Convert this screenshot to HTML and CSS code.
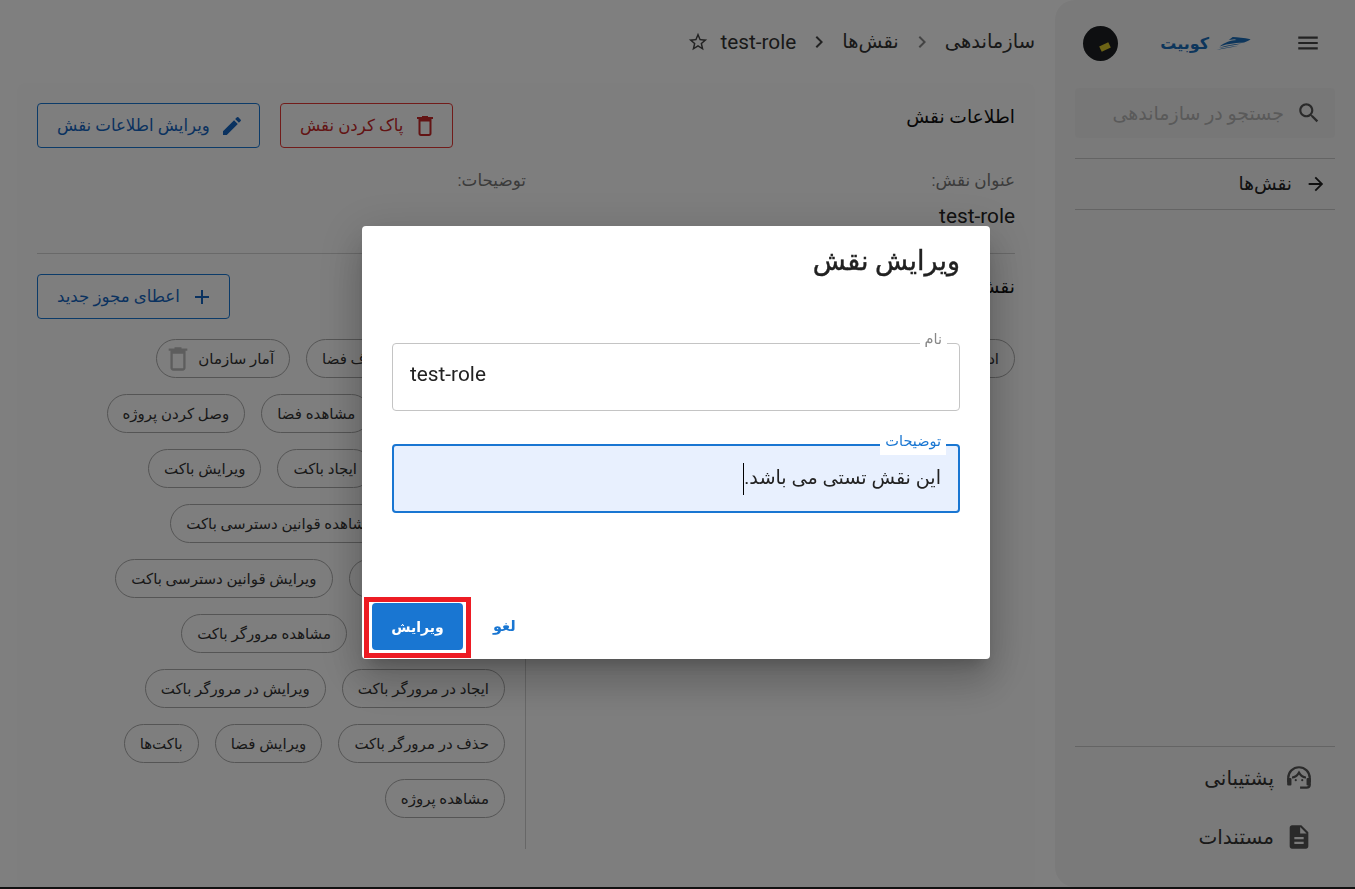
FILE: index.html
```html
<!DOCTYPE html>
<html lang="fa" dir="rtl">
<head>
<meta charset="utf-8">
<title>ویرایش نقش</title>
<link rel="stylesheet" href="styles.css">
</head>
<body>
<div class="app">
  <aside class="sidebar">
    <div class="side-top">
      <svg class="ico menu" viewBox="0 0 24 24"><path d="M3 18h18v-2H3v2zm0-5h18v-2H3v2zm0-7v2h18V6H3z"/></svg>
      <div class="logo">
        <svg class="boat" viewBox="0 0 105 40"><path d="M105 7C85 3 65 0 50 0L38 9l17-2 7 2C45 10 25 16 10 29c25-9 60-11 75-12 8-3 15-6 20-10z"/><path d="M7 34c23-9 48-12 71-14-23 5-48 9-71 14z"/><path d="M0 40c20-7 45-10 68-13-23 5-48 9-68 13z"/></svg>
        <span>کوبیت</span>
      </div>
      <div class="avatar"><i></i></div>
    </div>
    <div class="search">
      <svg class="ico" viewBox="0 0 24 24"><path d="M15.500 14h-.79l-.28-.27C15.410 12.590 16 11.110 16 9.500 16 5.910 13.090 3 9.500 3S3 5.910 3 9.500 5.910 16 9.500 16c1.610 0 3.090-.59 4.230-1.570l.27.28v.79l5 4.990L20.490 19l-4.990-5zm-6 0C7.010 14 5 11.990 5 9.500S7.010 5 9.500 5 14 7.010 14 9.500 11.990 14 9.500 14z"/></svg>
      <span>جستجو در سازماندهی</span>
    </div>
    <nav class="side-nav">
      <svg class="ico arrow" viewBox="0 0 24 24"><path d="M4 11v2h12l-5.500 5.500 1.420 1.420L19.840 12l-7.920-7.920L10.500 5.500 16 11z"/></svg>
      <span>نقش‌ها</span>
    </nav>
    <div class="side-bottom">
      <div class="side-link">
        <svg class="headset" viewBox="0 0 26 26"><path d="M3 17v-4a10 10 0 0 1 20 0v4"/><path d="M23 19c0 2-1 3-3 3h-6"/><path d="M6.500 12.500c3 0 5-2 6.500-4.500 1.500 2.500 3.500 4.500 6.500 4.500"/><rect class="solid" x="2" y="13" width="4" height="7" rx="1"/><rect class="solid" x="20" y="13" width="4" height="7" rx="1"/><circle class="solid" cx="10" cy="15" r="1"/><circle class="solid" cx="16" cy="15" r="1"/></svg>
        <span>پشتیبانی</span>
      </div>
      <div class="side-link">
        <svg class="ico" viewBox="0 0 24 24"><path d="M14 2H6c-1.100 0-1.990.9-1.990 2L4 20c0 1.100.89 2 1.990 2H18c1.100 0 2-.9 2-2V8l-6-6zm2 16H8v-2h8v2zm0-4H8v-2h8v2zm-3-5V3.500L18.500 9H13z"/></svg>
        <span>مستندات</span>
      </div>
    </div>
  </aside>

  <main class="main">
    <header class="crumbs">
      <span>سازماندهی</span>
      <svg class="chev light" viewBox="0 0 24 24"><path d="M10 6 8.590 7.410 13.170 12l-4.580 4.590L10 18l6-6z"/></svg>
      <span>نقش‌ها</span>
      <svg class="chev" viewBox="0 0 24 24"><path d="M10 6 8.590 7.410 13.170 12l-4.580 4.590L10 18l6-6z"/></svg>
      <span class="latin">test-role</span>
      <svg class="star" viewBox="0 0 24 24"><path d="M22 9.240l-7.190-.62L12 2 9.190 8.630 2 9.240l5.460 4.730L5.820 21 12 17.270 18.180 21l-1.630-7.020L22 9.240zM12 15.400l-3.760 2.270 1-4.280-3.320-2.880 4.380-.38L12 6.100l1.710 4.040 4.380.38-3.320 2.880 1 4.280L12 15.400z"/></svg>
    </header>

    <section class="card">
      <div class="head-row">
        <h2>اطلاعات نقش</h2>
        <div class="actions">
          <button class="btn danger">
            <svg class="ico" viewBox="0 0 24 24"><path d="M15 3V2H9v1H4v2h1.500v14.500c0 1.400 1 2.500 2.500 2.500h8c1.500 0 2.500-1.100 2.500-2.500V5H20V3h-5zm1.500 16.500c0 .3-.2.5-.5.5H8c-.3 0-.5-.2-.5-.5V7.500h9v12z"/></svg>
            پاک کردن نقش
          </button>
          <button class="btn primary">
            <svg class="ico" viewBox="0 0 24 24"><path d="M3 17.250V21h3.750L17.810 9.940l-3.750-3.750L3 17.250zM20.710 7.040c.39-.39.39-1.020 0-1.410l-2.340-2.340a.9959.9959 0 0 0-1.410 0l-1.830 1.830 3.750 3.750 1.830-1.830z"/></svg>
            ویرایش اطلاعات نقش
          </button>
        </div>
      </div>

      <div class="info">
        <div class="info-col">
          <p class="label">عنوان نقش:</p>
          <p class="value">test-role</p>
        </div>
        <div class="info-col">
          <p class="label">توضیحات:</p>
        </div>
      </div>

      <hr class="rule">

      <div class="head-row perm-head">
        <h2>نقش‌ها</h2>
        <button class="btn primary">
          <svg class="ico" viewBox="0 0 24 24"><path d="M19 13h-6v6h-2v-6H5v-2h6V5h2v6h6v2z"/></svg>
          اعطای مجوز جدید
        </button>
      </div>

      <div class="perm-grid">
        <div class="perm-col first">
          <div class="chip-row"><span class="chip">ادمین سازمان</span></div>
        </div>
        <div class="perm-col second">
          <div class="chip-row">
            <span class="chip">ایجاد فضا</span>
            <span class="chip">حذف فضا</span>
            <span class="chip with-icon">آمار سازمان
              <svg viewBox="0 0 24 24"><path d="M15 3V2H9v1H4v2h1.500v14.500c0 1.400 1 2.500 2.500 2.500h8c1.500 0 2.500-1.100 2.500-2.500V5H20V3h-5zm1.500 16.500c0 .3-.2.5-.5.5H8c-.3 0-.5-.2-.5-.5V7.500h9v12z"/></svg>
            </span>
          </div>
          <div class="chip-row">
            <span class="chip">ویرایش پروژه</span>
            <span class="chip">مشاهده فضا</span>
            <span class="chip">وصل کردن پروژه</span>
          </div>
          <div class="chip-row">
            <span class="chip">مشاهده باکت</span>
            <span class="chip">ایجاد باکت</span>
            <span class="chip">ویرایش باکت</span>
          </div>
          <div class="chip-row">
            <span class="chip">حذف باکت</span>
            <span class="chip">مشاهده قوانین دسترسی باکت</span>
          </div>
          <div class="chip-row">
            <span class="chip">ایجاد دسترسی باکت</span>
            <span class="chip">ویرایش قوانین دسترسی باکت</span>
          </div>
          <div class="chip-row">
            <span class="chip">حذف قوانین باکت</span>
            <span class="chip">مشاهده مرورگر باکت</span>
          </div>
          <div class="chip-row">
            <span class="chip">ایجاد در مرورگر باکت</span>
            <span class="chip">ویرایش در مرورگر باکت</span>
          </div>
          <div class="chip-row">
            <span class="chip">حذف در مرورگر باکت</span>
            <span class="chip">ویرایش فضا</span>
            <span class="chip">باکت‌ها</span>
          </div>
          <div class="chip-row">
            <span class="chip">مشاهده پروژه</span>
          </div>
        </div>
      </div>
    </section>
  </main>
</div>

<div class="overlay">
  <div class="modal">
    <h1>ویرایش نقش</h1>
    <div class="modal-body">
      <fieldset class="field">
        <legend>نام</legend>
        <div class="field-text latin-input">test-role</div>
      </fieldset>
      <fieldset class="field focused">
        <legend>توضیحات</legend>
        <div class="field-text">این نقش تستی می باشد.<span class="caret"></span></div>
      </fieldset>
    </div>
    <div class="modal-actions">
      <button class="cancel">لغو</button>
      <button class="submit">ویرایش</button>
    </div>
    <div class="highlight"></div>
  </div>
</div>
</body>
</html>
```
FILE: styles.css
```css
* { box-sizing: border-box; }
html, body { margin: 0; height: 100%; }
body {
  font-family: Roboto, "DejaVu Sans", sans-serif;
  color: #212121;
  background: #222;
  overflow: hidden;
}
p, h1, h2 { margin: 0; }
button { font-family: inherit; }
.ico { width: 24px; height: 24px; fill: currentColor; flex: none; }

.app { display: flex; height: 887px; background: #fff; }

.sidebar {
  width: 300px; flex: none; background: #f5f5f5;
  border-radius: 0 20px 20px 0;
  display: flex; flex-direction: column; padding: 0 20px;
}
[dir="rtl"] .sidebar { border-radius: 20px 0 0 20px; }
.side-top { height: 86px; margin-bottom: 2px; display: flex; align-items: center; color: #444; padding: 0 14px 0 17px; }
.menu { width: 26px; height: 26px; }
.logo { display: flex; align-items: center; gap: 7px; margin-right: 44px; color: #1b6cb8; font-size: 16px; font-weight: 700; }
.boat { width: 35px; height: 13px; fill: #1b6cb8; }
.avatar { width: 35px; height: 35px; border-radius: 50%; background: #1c1f22; margin-right: auto; margin-left: -9px; display: flex; align-items: center; justify-content: center; }
.avatar i { width: 10px; height: 6px; background: #d9c62a; transform: rotate(-25deg); margin-left: 8px; margin-top: 8px; }
.search {
  height: 50px; background: #efefef; border-radius: 4px;
  display: flex; align-items: center; gap: 12px; padding: 0 13px 0 0;
  font-size: 19px; color: #b4b4b4;
}
.search .ico { color: #555; width: 26px; height: 26px; }
.side-nav {
  margin-top: 20px; height: 52px;
  border-top: 1px solid #c8c8c8; border-bottom: 1px solid #c8c8c8;
  display: flex; align-items: center; gap: 13px; padding: 0 8px; font-size: 18.500px; color: #222;
}
.arrow { width: 22px; height: 22px; }
.side-bottom { margin-top: auto; border-top: 1px solid #c8c8c8; padding: 15px 22px 34px; display: flex; flex-direction: column; gap: 27px; }
.side-link { display: flex; align-items: center; gap: 11px; height: 32px; font-size: 20px; color: #333; }
.side-link .ico { width: 28px; height: 28px; color: #555; }
.headset { width: 28px; height: 28px; flex: none; fill: none; stroke: #555; stroke-width: 2; }
.headset .solid { fill: #555; stroke: none; }

.main { flex: 1; min-width: 0; padding: 0 20px 0 17px; }
.crumbs { height: 83px; display: flex; align-items: center; gap: 11px; font-size: 19.500px; color: #333; }
.latin { font-size: 20.800px; }
.chev { width: 24px; height: 24px; fill: #444; }
.chev.light { fill: #888; }
.star { width: 22px; height: 22px; fill: #444; }

.card { display: flex; flex-direction: column; background: #fdfdfd; padding: 0 20px; height: 804px; border-radius: 8px; }
.head-row { display: flex; align-items: flex-start; justify-content: space-between; padding-top: 20px; }
.head-row h2 { font-size: 18.700px; font-weight: 400; color: #111; line-height: 28px; }
.actions { display: flex; gap: 20px; }
.btn {
  height: 45px; border-radius: 4px; background: transparent;
  display: flex; align-items: center; gap: 10px; padding: 0 15px 0 19px;
  font-size: 16.600px; cursor: pointer;
}
.btn.primary { border: 1px solid #1976d2; color: #1565c0; }
.btn.danger { border: 1px solid #e53935; color: #c62828; }
.info { display: flex; margin-top: 20px; }
.info-col { width: 489px; }
.label { font-size: 16.800px; color: #777; line-height: 24px; }
.value { font-size: 20.800px; line-height: 24px; margin-top: 12px; color: #222; }
.rule { border: 0; border-top: 1px solid #d2d2d2; margin: 25px 0 0; }
.perm-head { padding-top: 20px; }
.perm-head h2 { margin-top: -1px; }
.perm-grid { display: flex; margin-top: 20px; }
.perm-col { width: 489px; display: flex; flex-direction: column; gap: 16px; }
.perm-col.second { border-right: 1px solid #cfcfcf; padding-right: 20px; height: 510px; }
.chip-row { display: flex; gap: 16px; }
.chip {
  height: 39px; border: 1px solid #aaa; border-radius: 20px;
  padding: 0 15px; display: inline-flex; align-items: center; flex: none;
  font-size: 15px; color: #333;
}
.chip.with-icon svg { width: 28px; height: 28px; fill: #bbb; margin-right: 6px; margin-left: -8px; }

.overlay { position: fixed; inset: 0; background: rgba(0,0,0,.5); }
.modal {
  position: absolute; left: 362px; top: 226px; width: 628px; height: 433px;
  background: #fff; border-radius: 4px;
  box-shadow: 0 11px 15px -7px rgba(0,0,0,.2), 0 24px 38px 3px rgba(0,0,0,.14), 0 9px 46px 8px rgba(0,0,0,.12);
  display: flex; flex-direction: column; padding: 0 30px;
}
.modal h1 { font-size: 27px; font-weight: 400; -webkit-text-stroke: .4px #212121; line-height: 32px; margin-top: 19px; color: #212121; }
.modal-body { display: flex; flex-direction: column; gap: 24px; margin-top: 56px; }
.field {
  margin: 0; padding: 0; height: 78px; border: 1px solid #c4c4c4; border-radius: 4px;
  background: #fff;
}
.field legend {
  margin: 0 12px 0 0; padding: 0 5px 6px; font-size: 14.500px; color: #888; line-height: 14px;
}
.field-text { padding: 0 17px; font-size: 19.200px; line-height: 30px; margin-top: 6px; color: #222; }
.latin-input { direction: ltr; text-align: left; font-size: 20.800px; }
.field.focused { border: 2px solid #1976d2; background: #e8f0fe; }
.field.focused legend { color: #1976d2; background: #fff; }
.field.focused .field-text { margin-top: 8px; }
.caret { display: inline-block; width: 1px; height: 32px; background: #000; vertical-align: middle; }
.modal-actions { position: absolute; left: 10px; bottom: 9px; display: flex; flex-direction: row; gap: 22px; align-items: center; }
.submit { width: 91px; height: 47px; border: 0; border-radius: 4px; background: #1976d2; color: #fff; font-size: 14px; font-weight: 700; }
.cancel { border: 0; background: none; color: #1976d2; font-size: 14.500px; font-weight: 700; padding: 0 8px; }
.highlight { position: absolute; left: 2px; top: 371px; width: 107px; height: 61px; border: 5px solid #ed1c24; }
```
